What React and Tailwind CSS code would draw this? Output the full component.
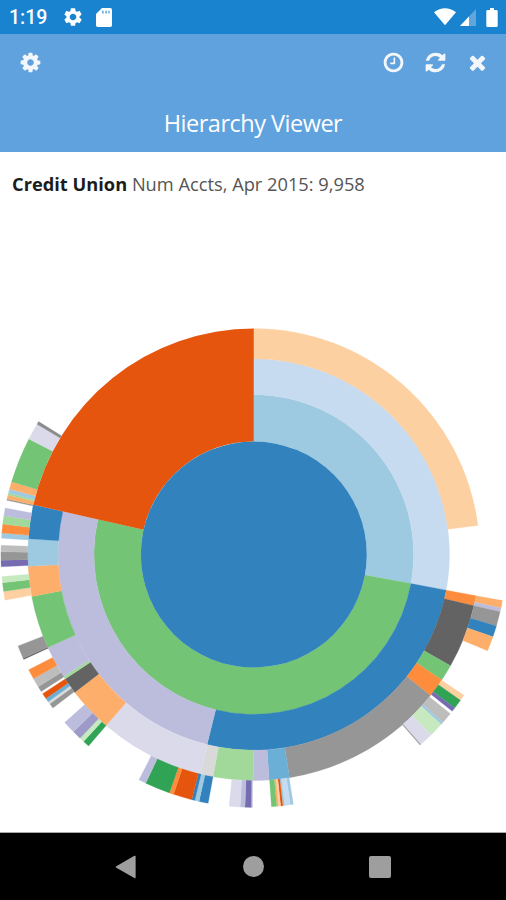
import React from "react";
import { MdSettings } from "react-icons/md";

const CX = 253.8;
const CY = 354.5;
const RADII = [0, 113, 159.8, 195.7, 226, 252.9];

// [ring, start angle, end angle, colour], angles clockwise from twelve o'clock
const ARCS = [
  [1, 0, 100.5, "#9ecae1"],
  [1, 100.5, 282.7, "#74c476"],
  [2, 0, 100.5, "#c6dbef"],
  [2, 100.5, 193.8, "#3182bd"],
  [2, 193.8, 282.7, "#bcbddc"],
  [3, 0, 82.6, "#fdd0a2"],
  [3, 100.5, 103.1, "#fd8d3c"],
  [3, 103.1, 119.5, "#636363"],
  [3, 119.5, 123.7, "#74c476"],
  [3, 123.7, 128.6, "#fd8d3c"],
  [3, 128.6, 170.9, "#969696"],
  [3, 170.9, 176.1, "#6baed6"],
  [3, 176.1, 180.1, "#bcbddc"],
  [3, 180.1, 190.4, "#a1d99b"],
  [3, 190.4, 193.7, "#d9d9d9"],
  [3, 193.7, 220.8, "#dadaeb"],
  [3, 220.8, 232.4, "#fdae6b"],
  [3, 232.4, 236.6, "#636363"],
  [3, 236.6, 237.3, "#a1d99b"],
  [3, 237.3, 245.7, "#bcbddc"],
  [3, 245.7, 259.3, "#74c476"],
  [3, 259.3, 267, "#fdae6b"],
  [3, 267, 274, "#9ecae1"],
  [3, 274, 282.7, "#3182bd"],
  [4, 100.5, 102.2, "#fdae6b"],
  [4, 102.2, 103.1, "#bcbddc"],
  [4, 103.1, 106.4, "#969696"],
  [4, 106.4, 109, "#3182bd"],
  [4, 109, 112.4, "#fdae6b"],
  [4, 123.8, 125.2, "#fdd0a2"],
  [4, 125.2, 127.4, "#31a354"],
  [4, 127.4, 128.3, "#756bb1"],
  [4, 129, 131.6, "#bdbdbd"],
  [4, 131.6, 132.2, "#9ecae1"],
  [4, 132.2, 135.5, "#c7e9c0"],
  [4, 135.5, 138.7, "#dadaeb"],
  [4, 138.7, 138.9, "#969696"],
  [4, 171, 171.7, "#9ecae1"],
  [4, 171.7, 173, "#c6dbef"],
  [4, 173, 173.4, "#9ecae1"],
  [4, 173.4, 173.9, "#e6550d"],
  [4, 173.9, 174.4, "#fdd0a2"],
  [4, 174.4, 174.8, "#fdae6b"],
  [4, 174.8, 176, "#74c476"],
  [4, 180.3, 180.6, "#bcbddc"],
  [4, 180.6, 182, "#756bb1"],
  [4, 182, 183.1, "#bcbddc"],
  [4, 183.1, 185.6, "#dadaeb"],
  [4, 190.4, 192.5, "#3182bd"],
  [4, 192.5, 193.5, "#9ecae1"],
  [4, 193.5, 194.2, "#3182bd"],
  [4, 194.2, 198.5, "#e6550d"],
  [4, 198.5, 199.5, "#fd8d3c"],
  [4, 199.5, 205.3, "#31a354"],
  [4, 205.3, 207, "#bcbddc"],
  [4, 220.8, 222.3, "#31a354"],
  [4, 222.3, 223.4, "#c7e9c0"],
  [4, 223.4, 225.5, "#9e9ac8"],
  [4, 225.5, 228.4, "#bcbddc"],
  [4, 232.6, 233.8, "#969696"],
  [4, 233.8, 234.4, "#d9d9d9"],
  [4, 234.4, 235.3, "#6baed6"],
  [4, 235.3, 236.6, "#e6550d"],
  [4, 237.2, 238.5, "#969696"],
  [4, 238.5, 240.6, "#bdbdbd"],
  [4, 240.6, 242.9, "#fd8d3c"],
  [4, 245.5, 245.8, "#636363"],
  [4, 245.8, 248.8, "#969696"],
  [4, 259.6, 261.6, "#fdd0a2"],
  [4, 261.6, 263.6, "#74c476"],
  [4, 263.6, 265, "#c7e9c0"],
  [4, 267.2, 268.7, "#756bb1"],
  [4, 268.7, 270.6, "#969696"],
  [4, 270.6, 272.1, "#bdbdbd"],
  [4, 273.7, 274.9, "#9ecae1"],
  [4, 274.9, 276.9, "#fd8d3c"],
  [4, 276.9, 278.8, "#a1d99b"],
  [4, 278.8, 280.6, "#bcbddc"],
  [4, 282.4, 282.7, "#969696"],
  [4, 282.7, 283.6, "#fdae6b"],
  [4, 283.6, 284.1, "#a1d99b"],
  [4, 284.1, 285, "#9ecae1"],
  [4, 285, 286.7, "#fdae6b"],
  [4, 286.7, 297.2, "#74c476"],
  [4, 297.2, 301, "#dadaeb"],
  [4, 301, 301.7, "#8c8c8c"],
];

function arcPath(r0, r1, a0, a1) {
  const pt = (r, a) => {
    const t = (a * Math.PI) / 180;
    return `${(CX + r * Math.sin(t)).toFixed(2)} ${(CY - r * Math.cos(t)).toFixed(2)}`;
  };
  const large = a1 - a0 > 180 ? 1 : 0;
  return `M${pt(r0, a0)}L${pt(r1, a0)}A${r1} ${r1} 0 ${large} 1 ${pt(r1, a1)}L${pt(r0, a1)}A${r0} ${r0} 0 ${large} 0 ${pt(r0, a0)}Z`;
}

function Sunburst() {
  return (
    <svg className="block h-[632px] w-[506px]" viewBox="0 0 506 632">
      {ARCS.map(([ring, a0, a1, fill], i) => (
        <path key={i} d={arcPath(RADII[ring], RADII[ring + 1], a0, a1)} fill={fill} stroke={fill} strokeWidth="0.25" />
      ))}
      <path d={arcPath(RADII[1], RADII[4], 282.7, 360)} fill="#e6550d" />
      <circle cx={CX} cy={CY} r={RADII[1]} fill="#3182bd" />
    </svg>
  );
}

const COG =
  "M1152 896q0-106-75-181t-181-75-181 75-75 181 75 181 181 75 181-75 75-181zm512-109v222q0 12-8 23t-20 13l-185 28q-19 54-39 91 35 50 107 138 10 12 10 25t-9 23q-27 37-99 108t-94 71q-12 0-26-9l-138-108q-44 23-91 38-16 136-29 186-7 28-36 28h-222q-14 0-24.5-8.5t-11.5-21.5l-28-184q-49-16-90-37l-141 107q-10 9-25 9-14 0-25-11-126-114-165-168-7-10-7-23 0-12 8-23 15-21 51-66.5t54-70.5q-27-50-41-99l-183-27q-13-2-21-12.5t-8-23.5v-222q0-12 8-23t19-13l186-28q14-46 39-92-40-57-107-138-10-12-10-24 0-10 9-23 26-36 98.5-107.5t94.5-71.5q13 0 26 10l138 107q44-23 91-38 16-136 29-186 7-28 36-28h222q14 0 24.5 8.5t11.5 21.5l28 184q49 16 90 37l142-107q9-9 24-9 13 0 25 10 129 119 165 170 7 8 7 22 0 12-8 23-15 21-51 66.5t-54 70.5q26 50 41 98l183 28q13 2 21 12.5t8 23.5z";
const CLOCK =
  "M1024 544v448q0 14-9 23t-23 9h-320q-14 0-23-9t-9-23v-64q0-14 9-23t23-9h224v-352q0-14 9-23t23-9h64q14 0 23 9t9 23zm416 352q0-148-73-273t-198-198-273-73-273 73-198 198-73 273 73 273 198 198 273 73 273-73 198-198 73-273zm224 0q0 209-103 385.5t-279.5 279.5-385.5 103-385.5-103-279.5-279.5-103-385.5 103-385.5 279.5-279.5 385.5-103 385.5 103 279.5 279.5 103 385.5z";
const REFRESH =
  "M1639 1056q0 5-1 7-64 268-268 434.5t-478 166.5q-146 0-282.5-55t-243.5-157l-129 129q-19 19-45 19t-45-19-19-45v-448q0-26 19-45t45-19h448q26 0 45 19t19 45-19 45l-137 137q71 66 161 102t187 36q134 0 250-65t186-179q11-17 53-117 8-23 30-23h192q13 0 22.5 9.5t9.5 22.5zm25-800v448q0 26-19 45t-45 19h-448q-26 0-45-19t-19-45 19-45l138-138q-148-137-349-137-134 0-250 65t-186 179q-11 17-53 117-8 23-30 23h-199q-13 0-22.5-9.5t-9.5-22.5v-7q65-268 270-434.5t480-166.5q146 0 284 55.5t245 156.5l130-129q19-19 45-19t45 19 19 45z";
const TIMES =
  "M1490 1322q0 40-28 68l-136 136q-28 28-68 28t-68-28l-294-294-294 294q-28 28-68 28t-68-28l-136-136q-28-28-28-68t28-68l294-294-294-294q-28-28-28-68t28-68l136-136q28-28 68-28t68 28l294 294 294-294q28-28 68-28t68 28l136 136q28 28 28 68t-28 68l-294 294 294 294q28 28 28 68z";

function BarIcon({ d, label }) {
  return (
    <button type="button" aria-label={label} className="block">
      <svg className="block size-[23px] fill-[#f3f6fa]" viewBox="0 0 1792 1792">
        <path d={d} />
      </svg>
    </button>
  );
}

function StatusBar() {
  return (
    <div className="flex h-[34px] items-center bg-[#1a83d0] pl-[9px] pr-2 text-white">
      <span className="w-[53px] pt-[2px] font-['Roboto',sans-serif] text-[19.5px] font-medium leading-none whitespace-nowrap">1:19</span>
      <MdSettings className="size-[22px]" />
      <svg className="ml-3 block h-[19px] w-4" viewBox="0 0 16 19">
        <path d="M6 0H14.2Q16 0 16 1.8V17.2Q16 19 14.2 19H1.8Q0 19 0 17.2V6Z" fill="#fff" />
        <path d="M6 2.8H7.7V5.6H6ZM9.2 2.8H10.9V5.6H9.2ZM12.2 2.8H13.7V5.6H12.2Z" fill="#6fb0e2" />
      </svg>
      <div className="ml-auto flex items-center">
        <svg className="block h-[18px] w-[22px]" viewBox="0 0 22 18">
          <path d="M0 4.2Q11 -3.6 22 4.2L11 17.3Z" fill="#fff" />
        </svg>
        <svg className="ml-1 block h-[17px] w-4" viewBox="0 0 16 17">
          <path d="M16 0V17H0Z" fill="#5fa6dd" />
          <path d="M9 7.4V17H0Z" fill="#fff" />
        </svg>
        <svg className="ml-[10px] block h-[19px] w-3" viewBox="0 0 12 19">
          <path d="M4 0H8V2H10.5Q11.7 2 11.7 3.2V17.7Q11.7 19 10.5 19H1.5Q.3 19 .3 17.7V3.2Q.3 2 1.5 2H4Z" fill="#fff" />
        </svg>
      </div>
    </div>
  );
}

export default function App() {
  return (
    <div className="flex h-[900px] w-[506px] flex-col overflow-hidden bg-white font-['Open_Sans','Noto_Sans',sans-serif]">
      <StatusBar />
      <header className="flex h-[118px] flex-col bg-[#5fa2de] pt-[17px]">
        <div className="flex justify-between pl-[18.5px] pr-[17.5px]">
          <BarIcon d={COG} label="Settings" />
          <div className="flex gap-[19px]">
            <BarIcon d={CLOCK} label="History" />
            <BarIcon d={REFRESH} label="Refresh" />
            <BarIcon d={TIMES} label="Close" />
          </div>
        </div>
        <h1 className="mt-[33px] text-center text-[23.5px] leading-[32px] tracking-[-0.5px] text-white">Hierarchy Viewer</h1>
      </header>
      <main className="flex h-[680px] flex-col">
        <p className="h-12 pl-3 pt-5 text-[18.25px] leading-6 whitespace-nowrap text-[#555]">
          <b className="font-bold text-[#1c1c1c]">Credit Union</b> Num Accts, Apr 2015: 9,958
        </p>
        <Sunburst />
      </main>
      <nav className="flex h-[68px] items-center border-t border-[#aaa] bg-black">
        <svg className="ml-[115px] block h-6 w-[21px]" viewBox="0 0 21 24">
          <path d="M1.3 11.2 19.4 .8Q20.6 .4 20.6 1.6V22.4Q20.6 23.6 19.4 23L1.3 12.8Q0 12 1.3 11.2Z" fill="#9e9e9e" />
        </svg>
        <div className="ml-[107px] size-[21px] rounded-full bg-[#9e9e9e]" />
        <div className="ml-[105px] size-[22px] rounded-[2px] bg-[#9e9e9e]" />
      </nav>
    </div>
  );
}
